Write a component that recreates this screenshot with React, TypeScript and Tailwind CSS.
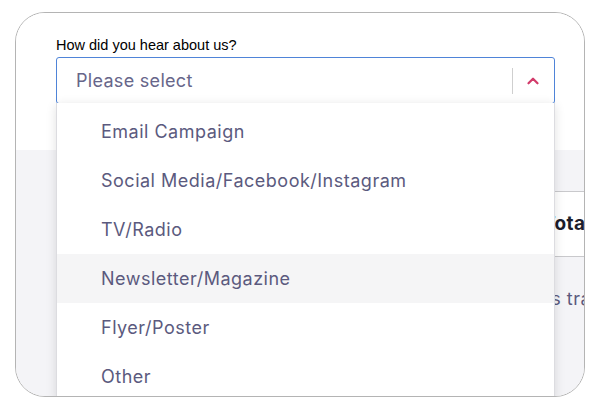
import { ChevronUp } from 'lucide-react'

const options = [
  'Email Campaign',
  'Social Media/Facebook/Instagram',
  'TV/Radio',
  'Newsletter/Magazine',
  'Flyer/Poster',
  'Other',
]

const hovered = 'Newsletter/Magazine'

export default function App() {
  return (
    <div className="w-[599px] h-[409px] bg-white pl-[15px] pt-[12px]">
      <div className="relative w-[570px] h-[385px] rounded-[30px] border border-[#b4b4b4] overflow-hidden bg-white">
        {/* form section */}
        <div className="h-[137px] bg-white pl-[40px] pr-[29px] pt-[22px]">
          <label className="block text-[14.5px] leading-[20px] text-black mb-[2px]" style={{ fontFamily: '"Liberation Sans", Arial, sans-serif' }}>
            How did you hear about us?
          </label>
          <div className="flex items-center h-[47px] w-[499px] rounded-[3px] border border-[#4f84d8] bg-white pl-[19px] pr-[12px]">
            <span className="flex-1 text-[18px] tracking-[0.3px] text-[#67668a]" style={{ fontFamily: 'Inter, "Noto Sans", sans-serif' }}>
              Please select
            </span>
            <span className="w-px h-[26px] bg-[#cfcfcf] mr-[11px]" />
            <ChevronUp size={18} strokeWidth={3} className="text-[#d23c6b]" />
          </div>
        </div>

        {/* page content behind the menu */}
        <div className="h-[248px] bg-[#f4f4f7] pt-[41px] pl-[60px]" style={{ fontFamily: 'Inter, "Noto Sans", sans-serif' }}>
          <div className="border-t border-[#c9c9cc]">
            <div className="flex items-center justify-end h-[65px] bg-white border-b border-[#c9c9cc]">
              <span className="text-[19px] font-bold tracking-[0.4px] text-[#1d1d2b] -mr-[7px]">Total</span>
            </div>
            <div className="flex items-center justify-end h-[82px] text-[18px] tracking-[0.5px] text-[#5b5a7e]">
              <span className="shrink-0 whitespace-nowrap -mr-[33px]">Sales travel</span>
            </div>
          </div>
        </div>

        {/* open dropdown menu */}
        <ul
          className="absolute left-[40px] top-[90px] w-[499px] bg-white border-x border-[#dcdce0] pt-[4px] shadow-[0_2px_10px_rgba(0,0,0,0.12)]"
          style={{ fontFamily: 'Inter, "Noto Sans", sans-serif' }}
        >
          {options.map(o => (
            <li
              key={o}
              className={
                o === hovered
                  ? 'flex items-center h-[49px] pl-[44px] text-[18px] tracking-[0.5px] text-[#5b5a7e] bg-[#f5f5f6]'
                  : 'flex items-center h-[49px] pl-[44px] text-[18px] tracking-[0.5px] text-[#5b5a7e]'
              }
            >
              {o}
            </li>
          ))}
        </ul>
      </div>
    </div>
  )
}
